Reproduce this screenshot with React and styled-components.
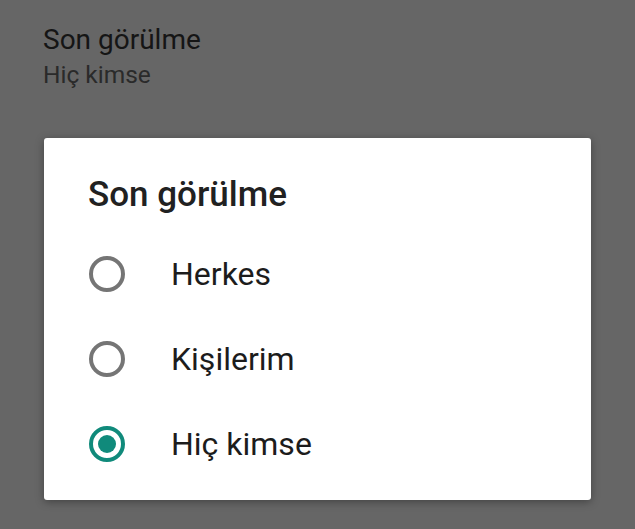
import React, { useState } from "react";
import styled, { createGlobalStyle } from "styled-components";

const Global = createGlobalStyle`
  html, body { margin: 0; padding: 0; background: #666666; }
  body { font-family: Roboto, "Noto Sans", "Liberation Sans", sans-serif; }
  * { box-sizing: border-box; }
`;

const Screen = styled.div`
  width: 635px;
  height: 529px;
  background: #666666;
  padding: 23px 44px 0 43px;
  overflow: hidden;
`;

const SettingTitle = styled.div`
  font-size: 28px;
  line-height: 34px;
  color: #151515;
`;

const SettingValue = styled.div`
  margin-top: 3px;
  font-size: 24.5px;
  line-height: 30px;
  color: #2a2a2a;
`;

const Dialog = styled.div`
  margin-top: 48px;
  margin-left: 1px;
  width: 547px;
  height: 362px;
  background: #ffffff;
  border-radius: 3px;
  box-shadow: 0 2px 8px rgba(0, 0, 0, 0.35);
  padding: 37px 0 0 44px;
`;

const DialogTitle = styled.div`
  font-size: 35px;
  font-weight: 500;
  line-height: 40px;
  color: #212121;
  margin-bottom: 16px;
`;

const Option = styled.label`
  display: flex;
  align-items: center;
  height: 85px;
  cursor: pointer;
`;

const Radio = styled.span`
  width: 36px;
  height: 36px;
  margin-left: 1px;
  border-radius: 50%;
  border: 4px solid ${(p) => (p.$checked ? "#108a7b" : "#757575")};
  display: flex;
  align-items: center;
  justify-content: center;
  flex-shrink: 0;
  &::after {
    content: "";
    display: ${(p) => (p.$checked ? "block" : "none")};
    width: 18px;
    height: 18px;
    border-radius: 50%;
    background: #108a7b;
  }
`;

const OptionLabel = styled.span`
  margin-left: 46px;
  font-size: 32px;
  line-height: 40px;
  color: #1c1c1c;
`;

const options = ["Herkes", "Kişilerim", "Hiç kimse"];

export default function App() {
  const [value, setValue] = useState("Hiç kimse");
  return (
    <>
      <Global />
      <Screen>
        <SettingTitle>Son görülme</SettingTitle>
        <SettingValue>{value}</SettingValue>
        <Dialog>
          <DialogTitle>Son görülme</DialogTitle>
          {options.map((o) => (
            <Option key={o} onClick={() => setValue(o)}>
              <Radio $checked={value === o} />
              <OptionLabel>{o}</OptionLabel>
            </Option>
          ))}
        </Dialog>
      </Screen>
    </>
  );
}
